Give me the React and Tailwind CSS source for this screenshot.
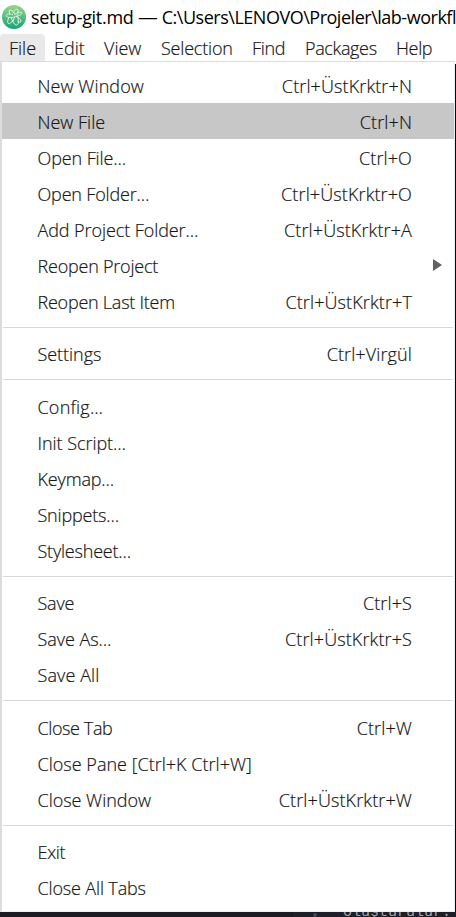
const font = "font-['Open_Sans','Noto_Sans',sans-serif]";

const groups = [
  [
    ["New Window", "Ctrl+ÜstKrktr+N", "tracking-[0.08px]"],
    ["New File", "Ctrl+N", "tracking-[0px]"],
    ["Open File…", "Ctrl+O", "tracking-[-0.1px]"],
    ["Open Folder…", "Ctrl+ÜstKrktr+O", "tracking-[-0.17px]"],
    ["Add Project Folder…", "Ctrl+ÜstKrktr+A", "tracking-[-0.08px]"],
    ["Reopen Project", "submenu", "tracking-[-0.22px]"],
    ["Reopen Last Item", "Ctrl+ÜstKrktr+T", "tracking-[-0.24px]"],
  ],
  [["Settings", "Ctrl+Virgül", "tracking-[-0.05px]"]],
  [
    ["Config…", "", "tracking-[0.2px]"],
    ["Init Script…", "", "tracking-[-0.05px]"],
    ["Keymap…", "", "tracking-[-0.15px]"],
    ["Snippets…", "", "tracking-[-0.2px]"],
    ["Stylesheet…", "", "tracking-[-0.2px]"],
  ],
  [
    ["Save", "Ctrl+S", "tracking-[-0.2px]"],
    ["Save As…", "Ctrl+ÜstKrktr+S", "tracking-[-0.05px]"],
    ["Save All", "", "tracking-[0.1px]"],
  ],
  [
    ["Close Tab", "Ctrl+W", "tracking-[-0.4px]"],
    ["Close Pane [Ctrl+K Ctrl+W]", "", "tracking-[0.02px]"],
    ["Close Window", "Ctrl+ÜstKrktr+W", "tracking-[-0.02px]"],
  ],
  [
    ["Exit", "", "tracking-[-0.3px]"],
    ["Close All Tabs", "", "tracking-[-0.15px]"],
  ],
];

function AtomIcon() {
  return (
    <svg className="h-6 w-6 shrink-0" viewBox="0 0 24 24" fill="none">
      <defs>
        <linearGradient id="atom" x1="0" y1="0" x2="0" y2="1">
          <stop offset="0" stopColor="#9bd58b" />
          <stop offset="1" stopColor="#16a376" />
        </linearGradient>
      </defs>
      <circle cx="12" cy="12" r="12" fill="url(#atom)" />
      <g stroke="#e8f8ea" strokeWidth="0.9" strokeLinecap="round" strokeLinejoin="round">
        <path d="M8 9.5C6.5 6 7.2 4.2 9 5.1C10.6 5.9 12.2 7.8 13.2 9.8" />
        <path d="M11.3 7.2C12.8 4.8 14.8 3.6 15.8 4.7C16.6 5.8 16 8.3 15 10.4" />
        <path d="M8 8.8C5.3 9 3.8 10 4.2 11.2C4.8 13 11 12.8 15.5 11.2C19.8 9.7 21 7.8 19 7.3C18 7 16.8 7.2 15.8 7.5" />
        <path d="M6.8 12.6C5.3 15.6 5.1 18.2 6.7 18.7C8 19 9.4 17.5 10.8 15.5" />
        <path d="M9.5 13C10.5 16.8 12.4 20 14.5 20C16.8 19.8 17 15.7 15.5 11.5" />
        <path d="M12.2 12.8L11.2 16.2M16.3 12.5C18.4 14 19.7 16 18.8 17C18.2 17.6 17 17.2 15.9 16.5" />
      </g>
      <circle cx="10.2" cy="9.5" r="0.7" fill="#e8f8ea" />
      <circle cx="14" cy="8.4" r="0.7" fill="#e8f8ea" />
    </svg>
  );
}

function Row({ label, keys, tracking }) {
  return (
    <div className={`flex h-9 items-center justify-between pl-[35.5px] ${keys === "submenu" ? "pr-3" : "pr-[42px]"} ${label === "New File" ? "bg-[#c7c7c7]" : ""}`}>
      <span className={`pt-0.5 ${tracking}`}>{label}</span>
      {keys === "submenu" ? (
        <svg className="h-3 w-[9px]" viewBox="0 0 9 12">
          <path d="M0 0L9 6L0 12Z" fill="#606164" />
        </svg>
      ) : (
        <span className="pt-0.5 tracking-[0.12px]">{keys}</span>
      )}
    </div>
  );
}

export default function App() {
  return (
    <div className={`${font} flex h-[917px] w-[456px] flex-col overflow-hidden whitespace-nowrap bg-white font-light text-[#171719]`}>
      <header className="flex h-[34px] shrink-0 items-center pl-0.5 text-[18px] font-normal tracking-[-0.3px] text-black">
        <AtomIcon />
        <span className="ml-[5px]">setup-git.md</span>
        <span className="ml-[5px] inline-block w-[19px] origin-left scale-x-110">—</span>
        <span className="ml-[5px] tracking-[-0.48px]">C:\Users\LENOVO\Projeler\lab-workfl</span>
      </header>
      <nav className="flex h-[27px] shrink-0 text-[18px] leading-[29px] tracking-[-0.35px] [-webkit-text-stroke:0.2px]">
        <span className="w-[45px] rounded-t bg-[#e9e9e9] pl-[9px] tracking-[0px]">File</span>
        <span className="w-[49px] pl-[9px] tracking-[0px]">Edit</span>
        <span className="w-[58px] pl-[10px] tracking-[0px]">View</span>
        <span className="w-[91px] pl-[9px] tracking-[-0.2px]">Selection</span>
        <span className="w-[53px] pl-[9px]">Find</span>
        <span className="w-[91px] pl-[9px]">Packages</span>
        <span className="pl-[9px]">Help</span>
      </nav>
      <div className="flex h-[851px] shrink-0">
        <main className="w-[455px] border-x border-t border-b border-[#dcdce0] border-b-[#eeeef0] border-l-2 border-t-[#dcdcdc] border-r-[#eeeef0] pt-[5px] text-[18px] [-webkit-text-stroke:0.2px]">
          {groups.map((items, g) => (
            <section key={g}>
              {g > 0 && (
                <div className={`${g % 2 ? "h-4" : "h-[17px]"} pl-px pr-px pt-2`}>
                  <div className="h-px bg-[#d9d9d9]" />
                </div>
              )}
              {items.map(([label, keys, tracking]) => (
                <Row key={label} label={label} keys={keys} tracking={tracking} />
              ))}
            </section>
          ))}
        </main>
        <div className="mt-[3px] w-px bg-[#08090f]" />
      </div>
      <footer className="flex h-[5px] shrink-0 overflow-hidden bg-[#1d1e28]">
        <div className="w-[293px] border-r border-[#15161d] bg-[#1c1a22]" />
        <div className="ml-[20px] mt-px h-1 w-1 rounded-full bg-[#414657]" />
        <span className="-mt-[7px] ml-[26px] font-['Liberation_Mono',monospace] text-[15px] font-normal leading-4 text-[#a0a4b0]">oluşturulur.</span>
      </footer>
    </div>
  );
}
